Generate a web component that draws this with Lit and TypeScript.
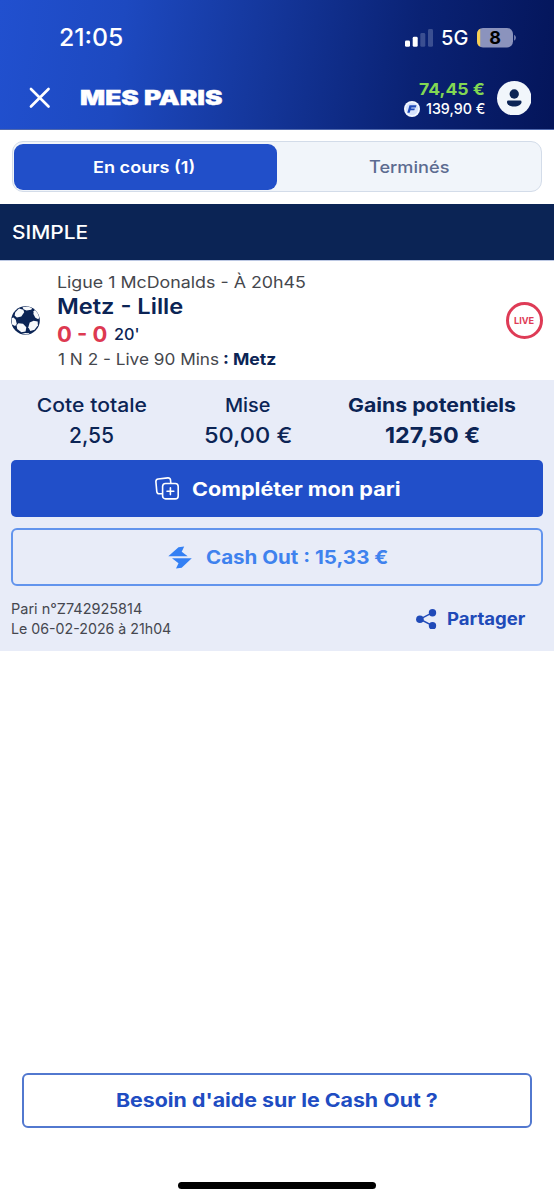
import { LitElement, html, css } from "lit";
import { customElement, property } from "lit/decorators.js";
import { styleMap } from "lit/directives/style-map.js";

/** A single line of text whose ink is stretched to span a given width. */
@customElement("fit-text")
class FitText extends LitElement {
  @property({ type: Number }) width = 0;
  @property() text = "";
  @property({ attribute: false }) shape = { scale: 1, shift: 0 };

  static styles = css`
    :host { display: block; flex: none; white-space: pre; }
    .box { display: block; }
    .ink { display: inline-block; transform-origin: 0 50%; }
  `;

  firstUpdated() {
    const cs = getComputedStyle(this);
    const ctx = document.createElement("canvas").getContext("2d")!;
    ctx.font = `${cs.fontWeight} ${cs.fontSize} ${cs.fontFamily}`;
    const m = ctx.measureText(this.text);
    const ink = m.actualBoundingBoxLeft + m.actualBoundingBoxRight;
    if (ink > 0) this.shape = { scale: this.width / ink, shift: m.actualBoundingBoxLeft };
  }

  render() {
    return html`<span class="box" style=${styleMap({ width: `${this.width}px` })}><span class="ink"
      style=${styleMap({ transform: `scaleX(${this.shape.scale}) translateX(${this.shape.shift}px)` })}>${this.text}</span></span>`;
  }
}

@customElement("app-root")
class AppRoot extends LitElement {
  static styles = css`
    :host {
      display: flex; flex-direction: column; height: 1200px; width: 554px; overflow: hidden;
      background: #fff; color: #0b2455; box-sizing: border-box;
      font-family: Inter, "Open Sans", sans-serif; font-weight: 500;
    }
    * { box-sizing: border-box; }
    svg { display: block; flex: none; }
    .row { display: flex; align-items: center; }

    .header { height: 130px; flex: none; color: #fff; padding-top: 18px;
      background: linear-gradient(98deg, #2150cf 0%, #1d49c0 22%, #14369a 48%, #0a2274 74%, #04155a 100%);
      border-bottom: 1px solid #5069ae; }
    .status { height: 39px; padding: 0 38px 0 59.5px; justify-content: space-between; }
    .clock { font-size: 24px; line-height: 38px; }
    .indicators { gap: 9px; }
    .net { font-size: 20.5px; line-height: 38px; }
    .nav { height: 60px; margin-top: 11px; padding: 0 23px 0 29px; }
    .title { font-size: 19.5px; line-height: 24px; font-weight: 900; margin-left: 29.5px; flex: 1;
      -webkit-text-stroke: .4px #fff; }
    .wallet { display: flex; flex-direction: column; align-items: flex-end; margin-right: 12.5px; padding-top: 2px; }
    .cash { font-size: 16.5px; line-height: 20px; font-weight: 700; color: #82d853; }
    .bonus { gap: 5.5px; font-size: 14.6px; line-height: 20px; }

    .tabs { height: 51px; margin: 11px 12px 12px; flex: none; display: grid; grid-template-columns: 263px 1fr;
      border: 1.5px solid #d3dce9; border-radius: 11px; background: #f1f5fa; padding: 1.5px 1px; font-size: 16.6px; }
    .tab { display: flex; align-items: center; justify-content: center; color: #5c6b90; padding-left: 2px; }
    .tab.on { background: #214fc9; color: #fff; border-radius: 9px; font-weight: 600; padding: 0 3px 0 0; }

    .kind { height: 56px; flex: none; background: #0b2455; color: #fff; padding-left: 11.5px; font-size: 18.5px; }

    .bet { height: 120px; flex: none; padding: 0 11.500px 0 11px; border-top: 1px solid #bcc8e3; align-items: center; }
    .info { flex: 1; margin-left: 17.5px; }
    .meta { font-size: 16.2px; line-height: 22px; font-weight: 400; color: #45474d; gap: 5.500px; }
    .teams { font-size: 21.5px; line-height: 27px; font-weight: 600; }
    .score { gap: 7.5px; height: 28px; margin-left: -.5px; }
    .goals { font-size: 21.3px; font-weight: 700; color: #dd3951; }
    .minute { font-size: 15.8px; padding-top: 1px; }
    .pick { font-weight: 700; color: #0b2455; }
    .live { width: 37px; height: 37px; border: 3px solid #de3b56; border-radius: 50%; color: #de3b56;
      display: flex; align-items: center; justify-content: center; font-size: 9.4px; font-weight: 700; }

    .panel { height: 271px; flex: none; background: #e8ecf8; padding: 10px 11px 0; }
    .stats { display: grid; grid-template-columns: 162px 150px 218px; height: 70px; }
    .stat { display: flex; flex-direction: column; align-items: center; font-size: 18.6px; line-height: 30px; }
    .amount { font-size: 22px; line-height: 30px; }
    .strong { font-weight: 700; }
    .btn { display: flex; align-items: center; justify-content: center; border-radius: 6px; font-weight: 700; font-size: 18.6px; }
    .complete { height: 57px; background: #214fc9; color: #fff; gap: 13px; border-radius: 5px; padding-left: 2px; }
    .cashout { height: 58px; margin-top: 11px; border: 2px solid #6294ed; color: #3f82ee; gap: 14px; padding-left: 2px; }
    .foot { display: flex; justify-content: space-between; padding: 12.5px 18px 0 1px; }
    .ref { font-size: 14.4px; line-height: 20.5px; font-weight: 400; color: #45474f; }
    .share { gap: 11px; color: #204ab8; font-weight: 700; font-size: 17px; height: 41px; }

    .help { height: 55px; margin: auto 22px 54px; border: 2px solid #5278cf; color: #204cc2; font-size: 19.2px; flex: none; }
    .home { width: 198px; height: 7.5px; margin: 0 auto 11px; border-radius: 4px; background: #000; flex: none; }
  `;

  render() {
    return html`
      <div class="header">
        <div class="status row">
          <fit-text class="clock" width="62.5" text="21:05"></fit-text>
          <div class="indicators row">
            <svg width="28" height="18" viewBox="0 0 28 18">
              <rect x="0" y="11.5" width="5" height="6.3" rx="1.4" fill="#fff"/>
              <rect x="7.7" y="7.8" width="5" height="10" rx="1.4" fill="#fff"/>
              <rect x="15.3" y="4" width="5" height="13.8" rx="1.4" fill="#3b4f91"/>
              <rect x="23" y="0" width="5" height="17.8" rx="1.4" fill="#3b4f91"/>
            </svg>
            <fit-text class="net" width="26" text="5G"></fit-text>
            <svg width="39" height="20" viewBox="0 0 39 20">
              <defs><clipPath id="cell"><rect width="36" height="19.6" rx="6"/></clipPath></defs>
              <g clip-path="url(#cell)"><rect width="36" height="20" fill="#8b93bd"/><rect width="3.2" height="20" fill="#f7cf52"/></g>
              <path d="M37.2 6.8q1.6 1 1.6 3t-1.6 3z" fill="#8b93bd"/>
              <text x="18" y="16.2" text-anchor="middle" font-family="Inter, sans-serif" font-size="18" font-weight="700" fill="#000">8</text>
            </svg>
          </div>
        </div>
        <div class="nav row">
          <svg width="21.5" height="21.5" viewBox="0 0 22 22"><path d="M2 2l18 18M20 2L2 20" stroke="#fff" stroke-width="2.7" stroke-linecap="round"/></svg>
          <div class="title"><fit-text width="142.5" text="MES PARIS"></fit-text></div>
          <div class="wallet">
            <fit-text class="cash" width="65.5" text="74,45 €"></fit-text>
            <div class="bonus row">
              <svg width="16" height="16" viewBox="0 0 16 16">
                <circle cx="8" cy="8" r="8" fill="#f5f9ff"/><circle cx="8" cy="8" r="6.2" fill="#d6e2fb"/>
                <path d="M5.5 4.3h7l-.7 2.1H7.4l-.3 1h3.8l-.6 1.9H6.5l-.8 2.5H3.3z" fill="#1f4ab9"/>
              </svg>
              <fit-text width="58.5" text="139,90 €"></fit-text>
            </div>
          </div>
          <svg width="34.5" height="34.5" viewBox="0 0 34 34">
            <circle cx="17" cy="17" r="17" fill="#f1f6fb"/>
            <circle cx="17" cy="12.8" r="4.6" fill="#0b2455"/>
            <path d="M11.200 19.300h11.600q1.400 0 1.400 1.400c0 2.700-3.400 4.400-7.200 4.400s-7.200-1.700-7.200-4.400q0-1.400 1.400-1.400z" fill="#0b2455"/>
          </svg>
        </div>
      </div>

      <div class="tabs">
        <div class="tab on"><fit-text width="100" text="En cours (1)"></fit-text></div>
        <div class="tab"><fit-text width="80.500" text="Terminés"></fit-text></div>
      </div>

      <div class="kind row"><fit-text width="76" text="SIMPLE"></fit-text></div>

      <div class="bet row">
        <svg width="29" height="29" viewBox="0 0 29 29">
          <defs><clipPath id="ball"><circle cx="14.500" cy="14.500" r="14"/></clipPath></defs>
          <circle cx="14.500" cy="14.500" r="14.300" fill="#0b2455"/>
          <g clip-path="url(#ball)" fill="#f7f9fc">
            <path d="M4.300 6.200L8 2.600l4.300 1.100.9 2.600-2.900 4.300-4.400.9-2.300-1.900z"/>
            <path d="M11.500 1.200l5.500-1 4.200 1.600-.9 2-4.900.6-2.900-1.200z"/>
            <path d="M22.700 5.300l1.600-1.500 3.200 3.300 1 4.300-1.300 1.800-2.800-1.500-2-3.600z"/>
            <path d="M.3 12.300l2.300-.9 2.200 2.300 1 4.200-1.700 2L1 18.500z"/>
            <path d="M7.400 17.300l4.600.4 3.300 3.600-.7 4.100-4.200.9-4.200-3.200-.6-3.800z"/>
            <path d="M18.700 16.600l3.900-1.900 4.100.7.200 3.800-3.300 4.600-4.300 1.300-2-3.900z"/>
            <path d="M10.500 28l3.600-1 4.400.3-1.500 1.700z"/>
          </g>
        </svg>
        <div class="info">
          <div class="meta"><fit-text width="247" text="Ligue 1 McDonalds - À 20h45"></fit-text></div>
          <div class="teams"><fit-text width="124.500" text="Metz - Lille"></fit-text></div>
          <div class="score row">
            <fit-text class="goals" width="50" text="0 - 0"></fit-text>
            <fit-text class="minute" width="23.500" text="20'"></fit-text>
          </div>
          <div class="meta row">
            <fit-text width="160.500" text="1 N 2 - Live 90 Mins"></fit-text>
            <fit-text class="pick" width="52" text=": Metz"></fit-text>
          </div>
        </div>
        <div class="live"><fit-text width="20.500" text="LIVE"></fit-text></div>
      </div>

      <div class="panel">
        <div class="stats">
          <div class="stat"><fit-text width="109" text="Cote totale"></fit-text><fit-text class="amount" width="43.500" text="2,55"></fit-text></div>
          <div class="stat"><fit-text width="44.500" text="Mise"></fit-text><fit-text class="amount" width="86.500" text="50,00 €"></fit-text></div>
          <div class="stat strong"><fit-text width="167.500" text="Gains potentiels"></fit-text><fit-text class="amount" width="94" text="127,50 €"></fit-text></div>
        </div>
        <div class="btn complete">
          <svg width="24" height="23" viewBox="0 0 24 23" fill="none" stroke="#fff" stroke-width="1.600" stroke-linecap="round" stroke-linejoin="round">
            <rect x="7.600" y="6.500" width="15.600" height="15.400" rx="3"/>
            <path d="M15.400 10.800v6.800M12 14.200h6.800"/>
            <path d="M7.300 16.700l-3 .1q-2.200 0-2.500-2.200L.9 4.700Q.8 2.300 3.200 2L12.800.9q2.300-.1 2.700 2l.3 3.300"/>
          </svg>
          <fit-text width="208.500" text="Compléter mon pari"></fit-text>
        </div>
        <div class="btn cashout">
          <svg width="24" height="23" viewBox="0 0 24 23" fill="#3480f4">
            <path d="M.3 10.300L10.500 1.200 16.200.5l-2.500 5.300 6 4.500z"/>
            <path d="M4 12.300h19.800L13.700 21.800 8 22.400l2.500-5.100z"/>
          </svg>
          <fit-text width="181.500" text="Cash Out : 15,33 €"></fit-text>
        </div>
        <div class="foot">
          <div class="ref">
            <fit-text width="130" text="Pari n°Z742925814"></fit-text>
            <fit-text width="159" text="Le 06-02-2026 à 21h04"></fit-text>
          </div>
          <div class="share row">
            <svg width="20.500" height="20.500" viewBox="0 0 20.500 20.500" fill="#204ab8">
              <path d="M16.500 3.700L4 10.200l12.500 6.500" fill="none" stroke="#204ab8" stroke-width="1.500"/>
              <circle cx="3.900" cy="10.200" r="3.800"/><circle cx="16.500" cy="3.700" r="3.700"/><circle cx="16.500" cy="16.800" r="3.700"/>
            </svg>
            <fit-text width="77.500" text="Partager"></fit-text>
          </div>
        </div>
      </div>

      <div class="btn help"><fit-text width="320" text="Besoin d'aide sur le Cash Out ?"></fit-text></div>
      <div class="home"></div>
    `;
  }
}
